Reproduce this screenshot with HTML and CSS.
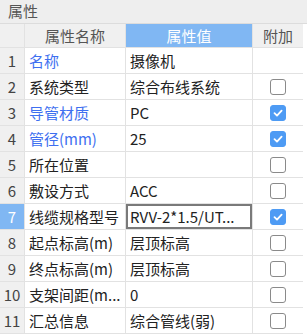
FILE: index.html
```html
<!DOCTYPE html>
<html>
<head>
<meta charset="utf-8">
<link rel="stylesheet" href="styles.css">
</head>
<body>
<div class="panel">
  <div class="title">属性</div>
  <div class="grid">
    <div class="hd num"></div>
    <div class="hd">属性名称</div>
    <div class="hd hd-sel">属性值</div>
    <div class="hd">附加</div>

    <div class="num">1</div>
    <div class="name blue">名称</div>
    <div class="val">摄像机</div>
    <div class="chk"></div>

    <div class="num">2</div>
    <div class="name">系统类型</div>
    <div class="val">综合布线系统</div>
    <div class="chk"><span class="box"></span></div>

    <div class="num">3</div>
    <div class="name blue">导管材质</div>
    <div class="val">PC</div>
    <div class="chk"><span class="box on"><svg viewBox="0 0 16 16" width="16" height="16"><path d="M4.5 8.2 L7 10.6 L11.6 5.6" fill="none" stroke="#fff" stroke-width="1.8" stroke-linecap="round" stroke-linejoin="round"/></svg></span></div>

    <div class="num">4</div>
    <div class="name blue">管径(mm)</div>
    <div class="val">25</div>
    <div class="chk"><span class="box on"><svg viewBox="0 0 16 16" width="16" height="16"><path d="M4.5 8.2 L7 10.6 L11.6 5.6" fill="none" stroke="#fff" stroke-width="1.8" stroke-linecap="round" stroke-linejoin="round"/></svg></span></div>

    <div class="num">5</div>
    <div class="name">所在位置</div>
    <div class="val"></div>
    <div class="chk"><span class="box"></span></div>

    <div class="num">6</div>
    <div class="name">敷设方式</div>
    <div class="val">ACC</div>
    <div class="chk"><span class="box"></span></div>

    <div class="num num-sel">7</div>
    <div class="name">线缆规格型号</div>
    <div class="val edit">RVV-2*1.5/UT...</div>
    <div class="chk"><span class="box on"><svg viewBox="0 0 16 16" width="16" height="16"><path d="M4.5 8.2 L7 10.6 L11.6 5.6" fill="none" stroke="#fff" stroke-width="1.8" stroke-linecap="round" stroke-linejoin="round"/></svg></span></div>

    <div class="num">8</div>
    <div class="name">起点标高(m)</div>
    <div class="val">层顶标高</div>
    <div class="chk"><span class="box"></span></div>

    <div class="num">9</div>
    <div class="name">终点标高(m)</div>
    <div class="val">层顶标高</div>
    <div class="chk"><span class="box"></span></div>

    <div class="num">10</div>
    <div class="name">支架间距(m...</div>
    <div class="val">0</div>
    <div class="chk"><span class="box"></span></div>

    <div class="num">11</div>
    <div class="name">汇总信息</div>
    <div class="val">综合管线(弱)</div>
    <div class="chk"><span class="box"></span></div>
  </div>
</div>
</body>
</html>
```
FILE: styles.css
```css
html, body {
  margin: 0;
  padding: 0;
  background: #ffffff;
}
body {
  font-family: "Noto Sans CJK SC", "Noto Sans", sans-serif;
  font-size: 15px;
  color: #222;
}
.panel {
  width: 307px;
  height: 336px;
  overflow: hidden;
}
.title {
  height: 23px;
  line-height: 21px;
  padding-left: 8px;
  background: #eeeeee;
  color: #555;
  font-size: 15px;
  border-bottom: 1px solid #dcdcdc;
}
.grid {
  display: grid;
  width: 303px;
  grid-template-columns: 24px 100px 126px 50px;
  grid-template-rows: 23px repeat(11, 25px);
  gap: 1px;
  background: #e2e2e2;
  border-bottom: 1px solid #e2e2e2;
}
.grid > div {
  background: #fff;
  display: flex;
  align-items: center;
  white-space: nowrap;
  overflow: hidden;
  line-height: 1;
}
.grid > .hd {
  background: #f0f0f0;
  color: #555;
  justify-content: center;
}
.grid > .hd-sel {
  background: #80b7f3;
  color: #fff;
}
.grid > .num {
  background: #f0f0f0;
  color: #444;
  justify-content: center;
}
.grid > .num-sel {
  background: #80b7f3;
  color: #fff;
}
.name {
  padding-left: 4px;
}
.blue {
  color: #3e6ff0;
}
.val {
  padding-left: 4px;
}
.grid > .edit {
  box-shadow: inset 0 0 0 2px #7a7a7a;
}
.grid > .chk {
  justify-content: center;
}
.box {
  display: block;
  width: 14px;
  height: 14px;
  border: 1px solid #8a8a8a;
  border-radius: 3px;
  background: #fff;
  position: relative;
}
.box.on {
  background: #4e9bf4;
  border-color: #4e9bf4;
}
.box svg {
  position: absolute;
  left: -1px;
  top: -1px;
}
```
